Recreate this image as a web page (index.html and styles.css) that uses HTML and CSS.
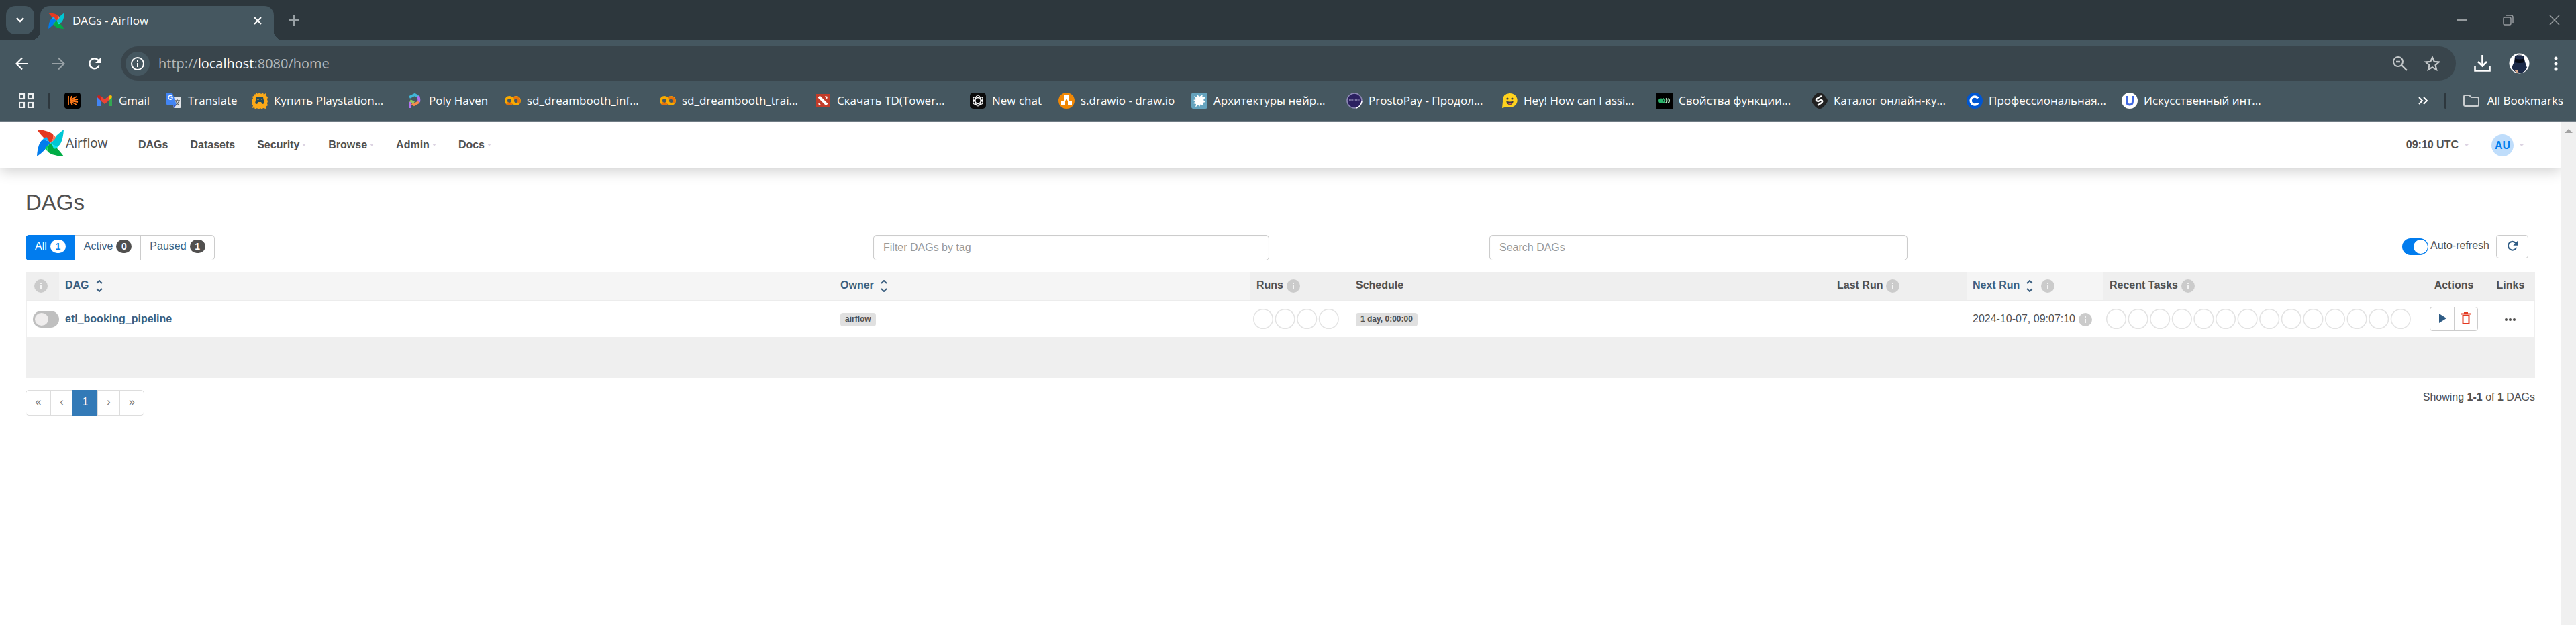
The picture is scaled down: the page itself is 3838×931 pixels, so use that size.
FILE: index.html
```html
<!DOCTYPE html>
<html lang="en">
<head>
<meta charset="utf-8">
<title>DAGs - Airflow</title>
<link rel="stylesheet" href="styles.css">
</head>
<body>
<svg class="defs" aria-hidden="true">
  <symbol id="pinwheel" viewBox="0 0 40 40">
    <path fill="#e43921" d="M0 0C14 1 22 4 24.500 8C25 13 23 17 20 20C15 15 13 12 10 12C6 8 3 4 0 0Z"/>
    <path fill="#ff7557" d="M24.500 8C28 10 29 13 28.500 15C25 16 22 18 20 20C23 17 25 13 24.500 8Z"/>
    <path fill="#00ad46" d="M40 40C26 39 18 36 15.500 32C15 27 17 23 20 20C25 25 27 28 30 28C34 32 37 36 40 40Z"/>
    <path fill="#04d659" d="M15.500 32C12 30 11 27 11.500 25C15 24 18 22 20 20C17 23 15 27 15.500 32Z"/>
    <path fill="#00c7d4" d="M20 20C24 17 28 15 28 10C32 6 36 3 40 0C39 14 36 22 32 24.500C27 25 23 23 20 20Z"/>
    <path fill="#11e1ee" d="M32 24.500C30 28 27 29 25 28.500C24 25 22 22 20 20C23 23 27 25 32 24.500Z"/>
    <path fill="#017cee" d="M0 40C1 26 4 18 8 15.500C13 15 17 17 20 20C15 25 12 27 12 30C8 34 4 37 0 40Z"/>
    <path fill="#0cb6ff" d="M8 15.500C10 12 13 11 15 11.500C16 15 18 18 20 20C17 17 13 15 8 15.500Z"/>
  </symbol>
  <symbol id="info" viewBox="0 0 20 20">
    <circle cx="10" cy="10" r="10" fill="#cbcbcb"/>
    <path fill="#f4f4f4" d="M9 5h2v2H9zM9 9h2v6H9z"/>
  </symbol>
  <symbol id="sort" viewBox="0 0 10 18">
    <path d="M1 5l4-4 4 4M1 13l4 4 4-4" fill="none" stroke="#3b5f80" stroke-width="2"/>
  </symbol>
  <symbol id="colab" viewBox="0 0 24 16">
    <circle cx="7" cy="8" r="5" fill="none" stroke="#f9ab00" stroke-width="4"/>
    <circle cx="17" cy="8" r="5" fill="none" stroke="#f9ab00" stroke-width="4"/>
    <path d="M13.500 4.500a5 5 0 0 1 7 7" fill="none" stroke="#e8710a" stroke-width="4"/>
    <path d="M3.500 11.500a5 5 0 0 0 7 0" fill="none" stroke="#e8710a" stroke-width="4"/>
  </symbol>
  <symbol id="reload" viewBox="0 0 20 20">
    <path d="M16.800 12.500A7.500 7.500 0 1 1 15.500 4.800L17.500 7" fill="none" stroke="currentColor" stroke-width="2.400"/>
    <path d="M19 1v8h-8z" fill="currentColor"/>
  </symbol>
</svg>

<header class="browser">
  <div class="tabstrip">
    <button class="tab-search" aria-label="Search tabs"><svg width="12" height="8" viewBox="0 0 12 8"><path d="M1 1l5 5 5-5" fill="none" stroke="#fff" stroke-width="2.400"/></svg></button>
    <div class="tab">
      <svg width="24" height="24"><use href="#pinwheel"/></svg>
      <span class="tab-title">DAGs - Airflow</span>
      <button class="plain" aria-label="Close tab"><svg width="12" height="12" viewBox="0 0 12 12"><path d="M1 1l10 10M11 1L1 11" stroke="#fff" stroke-width="2"/></svg></button>
    </div>
    <button class="plain new-tab" aria-label="New tab"><svg width="16" height="16" viewBox="0 0 16 16"><path d="M8 0v16M0 8h16" stroke="#98a0a4" stroke-width="2"/></svg></button>
    <div class="window-controls">
      <button class="plain" aria-label="Minimize"><svg width="16" height="16" viewBox="0 0 16 16"><path d="M0 8h16" stroke="#969b9e" stroke-width="2"/></svg></button>
      <button class="plain" aria-label="Restore"><svg width="16" height="16" viewBox="0 0 16 16"><rect x="1" y="4" width="11" height="11" rx="2" fill="none" stroke="#969b9e" stroke-width="1.500"/><path d="M4 1h8q3 0 3 3v8" fill="none" stroke="#969b9e" stroke-width="1.500"/></svg></button>
      <button class="plain" aria-label="Close window"><svg width="16" height="16" viewBox="0 0 16 16"><path d="M1 1l14 14M15 1L1 15" stroke="#969b9e" stroke-width="1.500"/></svg></button>
    </div>
  </div>

  <div class="toolbar">
    <button class="plain nav-btn" aria-label="Back"><svg width="20" height="20" viewBox="0 0 20 20"><path d="M19 10H2M10 1.500L1.500 10l8.500 8.500" fill="none" stroke="#fff" stroke-width="2.200"/></svg></button>
    <button class="plain nav-btn" aria-label="Forward"><svg width="20" height="20" viewBox="0 0 20 20"><path d="M1 10h17M10 1.500l8.500 8.500-8.500 8.500" fill="none" stroke="#98a1a6" stroke-width="2.200"/></svg></button>
    <button class="plain nav-btn white" aria-label="Reload"><svg width="20" height="20"><use href="#reload"/></svg></button>
    <div class="omnibox">
      <button class="site-info" aria-label="Site information"><svg width="20" height="20" viewBox="0 0 20 20"><circle cx="10" cy="10" r="9" fill="none" stroke="#fff" stroke-width="2"/><path d="M10 5v2M10 9v6" stroke="#fff" stroke-width="2"/></svg></button>
      <span class="url">http://<b>localhost</b>:8080/home</span>
      <button class="plain" aria-label="Zoom"><svg width="22" height="22" viewBox="0 0 22 22"><circle cx="8" cy="8" r="7" fill="none" stroke="#c3c7c9" stroke-width="2"/><path d="M5 8h6M13 13l8 8" stroke="#c3c7c9" stroke-width="2.400"/></svg></button>
      <button class="plain star" aria-label="Bookmark this page"><svg width="24" height="23" viewBox="0 0 24 23"><path d="M12 2.500l2.800 6.400 7 .6-5.300 4.600 1.600 6.800-6.100-3.600-6.100 3.600 1.600-6.800L2.200 9.500l7-.6z" fill="none" stroke="#c3c7c9" stroke-width="2.200"/></svg></button>
    </div>
    <button class="plain tool" aria-label="Downloads"><svg width="25" height="25" viewBox="0 0 25 25"><path d="M12.500 0v16M6 10l6.500 6.500L19 10M1.500 17v6.500h22V17" fill="none" stroke="#fff" stroke-width="2.600"/></svg></button>
    <button class="plain tool profile" aria-label="Profile"><svg width="31" height="31" viewBox="0 0 31 31"><circle cx="15.500" cy="15.500" r="15" fill="#fff"/><path d="M9 5q6-5 13 0l2 8 3 9q-4 8-11 8t-12-8l4-9z" fill="#1c2a48"/><path d="M9 8q7 3 14 0v6q-7 2-14 0z" fill="#070b16"/><path d="M13 3h6" stroke="#aaa"/><path d="M8 25l5 1 2 4-4-1z" fill="#d9a98a"/></svg></button>
    <button class="plain tool" aria-label="Menu"><svg width="6" height="22" viewBox="0 0 6 22"><circle cx="3" cy="3" r="2.500" fill="#fff"/><circle cx="3" cy="11" r="2.500" fill="#fff"/><circle cx="3" cy="19" r="2.500" fill="#fff"/></svg></button>
  </div>

  <nav class="bookmarks" aria-label="Bookmarks">
    <button class="plain" aria-label="Tab groups"><svg width="22" height="22" viewBox="0 0 22 22"><g fill="none" stroke="#eef0f1" stroke-width="2.200"><rect x="1" y="1" width="7" height="7"/><rect x="14" y="1" width="7" height="7"/><rect x="1" y="14" width="7" height="7"/><rect x="14" y="14" width="7" height="7"/></g></svg></button>
    <i class="divider"></i>
    <a href="#" class="bm bm-icon" aria-label="Kling"><svg width="24" height="24" viewBox="0 0 24 24"><rect width="24" height="24" rx="4"/><path d="M6 5v14M9 11l2-6M9 11l9-5M9 12l11-2M9 12l11 2M9 13l9 5M9 13l3 6" stroke="#ff7a1a" stroke-width="1.800"/></svg></a>
    <a href="#" class="bm bm-gmail"><svg width="24" height="24" viewBox="0 0 24 24"><path fill="#4285f4" d="M1 6l5 4v10H1z"/><path fill="#34a853" d="M18 10l5-4v14h-5z"/><path fill="#fbbc04" d="M18 5q5-3 5 2l-5 5z"/><path fill="#c5221f" d="M1 7q0-5 5-2v7z"/><path fill="#ea4335" d="M6 5l6 5 6-5v7l-6 5-6-5z"/></svg><span>Gmail</span></a>
    <a href="#" class="bm bm-translate"><svg width="24" height="24" viewBox="0 0 24 24"><path fill="#e0e3e7" d="M8 6h14q1 0 1 1v14q0 2-2 2h-9z"/><path fill="#4285f4" d="M1 1h9l6 17H2q-1 0-1-1z"/><path fill="#3156c8" d="M11 18h5l-4 5z"/><path d="M10 7H7.500M10 7a3 3 0 1 1-1-2" fill="none" stroke="#fff" stroke-width="1.500"/><path d="M14 12h7M17 10v2M20 12q-1 4-5 6M15 13l5 6" fill="none" stroke="#5f6368" stroke-width="1.300"/></svg><span>Translate</span></a>
    <a href="#" class="bm"><svg width="24" height="24" viewBox="0 0 24 24"><path fill="#fba919" d="M3 1l2 2 2-3 2 2 3-2 2 2 3-2 1 3 3-2 1 4 2 2-1 3 1 3-1 3 1 3-3 2v3l-4-1-2 2-2-2-3 2-2-2-3 2-1-3-3 1 1-4-2-2 1-3-1-3 2-2-1-3 2-1z"/><path fill="#254b5c" d="M7 7h10l2 9-3 1-2-3h-4l-2 3-3-1z"/><path d="M8 10h3M9.500 8.500v3M14 10h2" stroke="#fba919"/></svg><span>Купить Playstation...</span></a>
    <a href="#" class="bm bm-poly"><svg width="24" height="24" viewBox="0 0 24 24"><g fill="none" stroke-width="4"><path d="M4 7l8-4 5 3" stroke="#41b7d8"/><path d="M17 5q2 5 1 9" stroke="#b072f0"/><path d="M18 14l-7 4-3-2" stroke="#f58a4b"/><path d="M5 12l6 3" stroke="#8fc866"/><path d="M5 14v9" stroke="#b072f0"/></g></svg><span>Poly Haven</span></a>
    <a href="#" class="bm"><svg width="24" height="16"><use href="#colab"/></svg><span>sd_dreambooth_inf...</span></a>
    <a href="#" class="bm"><svg width="24" height="16"><use href="#colab"/></svg><span>sd_dreambooth_trai...</span></a>
    <a href="#" class="bm"><svg width="24" height="24" viewBox="0 0 24 24"><path fill="#c23c2a" d="M2 2h20v20l-10-1-10 1z"/><path d="M6 6l12 12" stroke="#fff" stroke-width="4"/><path fill="#fff" d="M15 5l4 1-1 4zM5 15l4 3-3 1z"/></svg><span>Скачать TD(Tower...</span></a>
    <a href="#" class="bm bm-chat"><svg width="24" height="24" viewBox="0 0 24 24"><rect width="24" height="24" rx="5" fill="#0b0b0b"/><g fill="none" stroke="#fff" stroke-width="1.200"><ellipse cx="12" cy="12" rx="4" ry="8"/><ellipse cx="12" cy="12" rx="4" ry="8" transform="rotate(60 12 12)"/><ellipse cx="12" cy="12" rx="4" ry="8" transform="rotate(120 12 12)"/></g></svg><span>New chat</span></a>
    <a href="#" class="bm bm-drawio"><svg width="24" height="24" viewBox="0 0 24 24"><circle cx="12" cy="12" r="12" fill="#f08705"/><path d="M12 7l-5 9M12 7l5 9" stroke="#fff" stroke-width="2"/><path fill="#fff" d="M9 4h6v6H9zM4 13h6v5H4zM14 13h6v5h-6z"/></svg><span>s.drawio - draw.io</span></a>
    <a href="#" class="bm"><svg width="24" height="24" viewBox="0 0 24 24"><rect width="24" height="24" rx="3" fill="#65a3be"/><path fill="#fff" d="M4 5l4 2 1-4 3 3 5-3-1 4 5 0-3 4 3 3-4 1 1 5-4-3-2 4-2-3-4 4 1-5-4-1 3-3-3-2 4-1z"/></svg><span>Архитектуры нейр...</span></a>
    <a href="#" class="bm"><svg width="24" height="24" viewBox="0 0 24 24"><circle cx="12" cy="12" r="11" fill="#2b2060" stroke="#8d88b5" stroke-width="1.500"/><path d="M15 23q7-3 8-10" fill="none" stroke="#fff" stroke-width="1.500"/><path d="M4 11.500h16" stroke="#77709f" stroke-width="3" stroke-dasharray="1.500 .7"/></svg><span>ProstoPay - Продол...</span></a>
    <a href="#" class="bm"><svg width="24" height="24" viewBox="0 0 24 24"><path fill="#ffd21e" d="M12 1a11 10.500 0 1 1-4 20l-7 2 1-10Q1 2 12 1z"/><circle cx="9" cy="9" r="1.600" fill="#3a3b45"/><circle cx="16" cy="9" r="1.600" fill="#3a3b45"/><path d="M7 12q5.500 3 11 0-1 6-5.500 6T7 12z" fill="#3a3b45"/><path d="M10 16q2.500-2 5 0-2.500 3-5 0z" fill="#ef4e4e"/></svg><span>Hey! How can I assi...</span></a>
    <a href="#" class="bm"><svg width="24" height="24" viewBox="0 0 24 24"><rect width="24" height="24"/><circle cx="6.500" cy="12" r="3.500" fill="#2bb36b"/><path d="M10 8.500q6 3.500 0 7 3-3.500 0-7z" fill="#39c67b" stroke="#39c67b"/><path d="M14 8.500q3 3.500 0 7M17.500 8.500q3 3.500 0 7" fill="none" stroke="#b8ecc5" stroke-width="2"/></svg><span>Свойства функции...</span></a>
    <a href="#" class="bm"><svg width="24" height="24" viewBox="0 0 24 24"><path fill="#212121" d="M12 0q4 0 8 5t4 7-4 7-8 5-8-5-4-7 4-7 8-5z"/><path d="M15 5L8 9q-3 3 2 4l4-2q4 1 1 4l-6 4" fill="none" stroke="#fff" stroke-width="2.500"/></svg><span>Каталог онлайн-ку...</span></a>
    <a href="#" class="bm"><svg width="24" height="24" viewBox="0 0 24 24"><circle cx="12" cy="12" r="12" fill="#0056d2"/><path d="M17 8.500a6 6 0 1 0 0 7" fill="none" stroke="#fff" stroke-width="3.500"/></svg><span>Профессиональная...</span></a>
    <a href="#" class="bm"><svg width="24" height="24" viewBox="0 0 24 24"><circle cx="12" cy="12" r="12" fill="#fff"/><path d="M7.500 5v8q0 5 4.500 5t4.500-5V5" fill="none" stroke="#4169e1" stroke-width="3"/></svg><span>Искусственный инт...</span></a>
    <div class="bookmarks-end">
      <button class="plain" aria-label="More bookmarks"><svg width="14" height="12" viewBox="0 0 14 12"><path d="M1 1l5 5-5 5M8 1l5 5-5 5" fill="none" stroke="#fff" stroke-width="2"/></svg></button>
      <i class="divider"></i>
      <a href="#" class="bm-all"><svg width="24" height="18" viewBox="0 0 24 18"><path d="M1 3q0-2 2-2h6l3 3h9q2 0 2 2v9q0 2-2 2H3q-2 0-2-2z" fill="none" stroke="#c9cdcf" stroke-width="2"/></svg><span>All Bookmarks</span></a>
    </div>
  </nav>
</header>

<div class="viewport">
  <div class="page">
    <nav class="navbar">
      <a href="#" class="brand"><svg width="40" height="40"><use href="#pinwheel"/></svg><span>Airflow</span></a>
      <a href="#" class="nav-item">DAGs</a>
      <a href="#" class="nav-item">Datasets</a>
      <a href="#" class="nav-item">Security<i class="caret"></i></a>
      <a href="#" class="nav-item">Browse<i class="caret"></i></a>
      <a href="#" class="nav-item">Admin<i class="caret"></i></a>
      <a href="#" class="nav-item">Docs<i class="caret"></i></a>
      <a href="#" class="nav-item clock">09:10 UTC<i class="caret wide"></i></a>
      <a href="#" class="nav-item user"><span class="avatar">AU</span><i class="caret wide"></i></a>
    </nav>

    <main>
      <h1>DAGs</h1>
      <div class="controls">
        <div class="filters">
          <a href="#" class="filter active">All <span class="count">1</span></a>
          <a href="#" class="filter">Active <span class="count">0</span></a>
          <a href="#" class="filter">Paused <span class="count">1</span></a>
        </div>
        <input class="field tags" type="text" placeholder="Filter DAGs by tag" aria-label="Filter DAGs by tag">
        <input class="field search" type="text" placeholder="Search DAGs" aria-label="Search DAGs">
        <div class="refresh">
          <input class="switch" type="checkbox" id="auto-refresh" checked>
          <label for="auto-refresh">Auto-refresh</label>
          <button class="refresh-btn" aria-label="Refresh"><svg width="17" height="17"><use href="#reload"/></svg></button>
        </div>
      </div>

      <div class="table-wrap">
        <table>
          <colgroup><col class="c-toggle"><col><col class="c-owner"><col class="c-runs"><col class="c-schedule"><col class="c-last"><col class="c-next"><col class="c-tasks"><col class="c-actions"><col class="c-links"></colgroup>
          <thead>
            <tr>
              <th class="toggle-head"><svg width="20" height="20"><use href="#info"/></svg></th>
              <th class="sortable"><a href="#">DAG<svg class="sort" width="10" height="18"><use href="#sort"/></svg></a></th>
              <th class="sortable"><a href="#">Owner<svg class="sort" width="10" height="18"><use href="#sort"/></svg></a></th>
              <th>Runs<svg class="tip" width="20" height="20"><use href="#info"/></svg></th>
              <th>Schedule</th>
              <th>Last Run<svg class="tip" width="20" height="20"><use href="#info"/></svg></th>
              <th class="sortable"><a href="#">Next Run<svg class="sort" width="10" height="18"><use href="#sort"/></svg></a><svg class="tip far" width="20" height="20"><use href="#info"/></svg></th>
              <th>Recent Tasks<svg class="tip" width="20" height="20"><use href="#info"/></svg></th>
              <th class="center">Actions</th>
              <th class="center">Links</th>
            </tr>
          </thead>
          <tbody>
            <tr>
              <td><input class="switch" type="checkbox" aria-label="Unpause etl_booking_pipeline"></td>
              <td><a href="#" class="dag">etl_booking_pipeline</a></td>
              <td><a href="#" class="label">airflow</a></td>
              <td class="rings"><svg width="130" height="32" viewBox="0 0 130 32"><g fill="none" stroke="#e3e3e3" stroke-width="1.500"><circle cx="16" cy="16" r="14.300"/><circle cx="48.600" cy="16" r="14.300"/><circle cx="81.200" cy="16" r="14.300"/><circle cx="113.800" cy="16" r="14.300"/></g></svg></td>
              <td><a href="#" class="label">1 day, 0:00:00</a></td>
              <td></td>
              <td class="date">2024-10-07, 09:07:10<svg class="tip" width="20" height="20"><use href="#info"/></svg></td>
              <td class="rings"><svg width="456" height="32" viewBox="0 0 456 32"><g fill="none" stroke="#e3e3e3" stroke-width="1.500"><circle cx="16" cy="16" r="14.300"/><circle cx="48.600" cy="16" r="14.300"/><circle cx="81.200" cy="16" r="14.300"/><circle cx="113.800" cy="16" r="14.300"/><circle cx="146.400" cy="16" r="14.300"/><circle cx="179" cy="16" r="14.300"/><circle cx="211.600" cy="16" r="14.300"/><circle cx="244.200" cy="16" r="14.300"/><circle cx="276.800" cy="16" r="14.300"/><circle cx="309.400" cy="16" r="14.300"/><circle cx="342" cy="16" r="14.300"/><circle cx="374.600" cy="16" r="14.300"/><circle cx="407.200" cy="16" r="14.300"/><circle cx="439.800" cy="16" r="14.300"/></g></svg></td>
              <td class="center"><div class="actions"><button aria-label="Trigger DAG"><svg width="20" height="20" viewBox="0 0 20 20"><path d="M5 3v14l11-7z" fill="#2f5c85"/></svg></button><button aria-label="Delete DAG"><svg width="20" height="20" viewBox="0 0 20 20"><path d="M3 3.500h14M7 2h6M5.500 6h9v12h-9z" fill="none" stroke="#e43921" stroke-width="2"/></svg></button></div></td>
              <td class="center"><a href="#" aria-label="Links"><svg width="16" height="6" viewBox="0 0 16 6"><g fill="#51504f"><circle cx="2" cy="3" r="2"/><circle cx="8" cy="3" r="2"/><circle cx="14" cy="3" r="2"/></g></svg></a></td>
            </tr>
          </tbody>
        </table>
      </div>

      <div class="footer">
        <nav class="pager" aria-label="Pagination">
          <a href="#">«</a><a href="#">‹</a><a href="#" class="current">1</a><a href="#">›</a><a href="#">»</a>
        </nav>
        <div>Showing <strong>1-1</strong> of <strong>1</strong> DAGs</div>
      </div>
    </main>
  </div>
  <div class="scrollbar"><i class="scroll-up"></i></div>
</div>
</body>
</html>
```
FILE: styles.css
```css
* { box-sizing: border-box; }
body {
  margin: 0;
  min-height: 100vh;
  display: flex;
  flex-direction: column;
  background: #fff;
  color: #51504f;
  font: 16px/22px "Liberation Sans", Arial, sans-serif;
}
svg { display: block; flex: none; }
a { color: #3b5f80; text-decoration: none; }
button { font: inherit; cursor: pointer; }
.defs { position: absolute; width: 0; height: 0; }
.plain { display: flex; padding: 0; border: 0; background: none; }

/* Browser window */
.browser {
  background: #455760;
  border-bottom: 2px solid #6f7b84;
  color: #fff;
  font: 17px/24px "Open Sans", "Noto Sans", sans-serif;
}
.tabstrip {
  display: flex;
  align-items: center;
  height: 60px;
  padding-left: 9px;
  background: #2d373d;
}
.tab-search {
  display: grid;
  place-items: center;
  width: 42px;
  height: 42px;
  border: 0;
  border-radius: 14px;
  background: #43555e;
}
.tab {
  position: relative;
  display: flex;
  align-items: center;
  align-self: flex-end;
  width: 348px;
  height: 51px;
  margin-left: 9px;
  padding: 0 18px 8px 12px;
  border-radius: 14px 14px 0 0;
  background: #455760;
}
.tab::before, .tab::after {
  content: "";
  position: absolute;
  bottom: 0;
  width: 14px;
  height: 14px;
}
.tab::before { right: 100%; background: radial-gradient(circle at 0 0, transparent 14px, #455760 14px); }
.tab::after { left: 100%; background: radial-gradient(circle at 100% 0, transparent 14px, #455760 14px); }
.tab-title { flex: 1; margin-left: 12px; }
.new-tab { margin-left: 22px; }
.window-controls { display: flex; gap: 53px; margin-left: auto; padding-right: 24px; }

.toolbar { display: flex; align-items: center; height: 69px; padding: 0 27px 0 23px; }
.nav-btn { width: 20px; margin-right: 34px; }
.white { color: #fff; }
.omnibox {
  display: flex;
  flex: 1;
  align-items: center;
  height: 51px;
  margin-right: 27px;
  margin-left: -5px;
  padding: 0 23px 0 7px;
  border-radius: 26px;
  background: #39454c;
}
.site-info {
  display: grid;
  place-items: center;
  width: 36px;
  height: 36px;
  border: 0;
  border-radius: 50%;
  background: #455760;
}
.url { flex: 1; margin-left: 13px; color: #b3b8bb; font-size: 20px; }
.url b { color: #fff; font-weight: 400; }
.star { margin-left: 25px; }
.tool + .tool { margin-left: 27px; }
.tool.profile + .tool { margin-left: 36px; }

.bookmarks { display: flex; align-items: center; height: 51px; padding: 0 19px 9px 28px; white-space: nowrap; }
.divider { width: 3px; height: 24px; border-radius: 2px; background: #2d373d; }
.bookmarks > .divider { margin: 0 21px 0 22px; }
.bm { display: flex; flex: none; align-items: center; gap: 9px; width: 231px; color: #fff; }
.bm-icon { width: 48px; }
.bm-gmail { width: 103px; }
.bm-translate { width: 128px; }
.bm-poly { width: 146px; }
.bm-chat { width: 132px; }
.bm-drawio { width: 198px; }
.bookmarks-end { display: flex; align-items: center; gap: 25px; margin-left: auto; }
.bm-all { display: flex; align-items: center; gap: 12px; color: #fff; }

/* Page */
.viewport { display: flex; flex: 1; }
.page { flex: 1; min-width: 0; overflow: hidden; }
.scrollbar { width: 22px; padding: 10px 5px; background: #f0f0f0; }
.scroll-up { display: block; border: 6px solid transparent; border-top: 0; border-bottom-color: #a3a3a3; }

.navbar {
  display: flex;
  align-items: center;
  height: 68px;
  padding: 0 55px 0 55px;
  box-shadow: 0 4px 20px rgba(0, 0, 0, .2);
  font-weight: 700;
}
.brand {
  display: flex;
  align-items: center;
  gap: 3px;
  width: 151px;
  padding-bottom: 6px;
  color: #51504f;
  font: 19px/22px "Noto Sans", sans-serif;
}
.nav-item { display: flex; align-items: center; margin-right: 33px; color: #51504f; }
.caret { margin-left: 4px; border: 3px solid transparent; border-top: 4px solid #dcd3e2; border-bottom: 0; }
.caret.wide { margin-left: 8px; border-width: 4px 4px 0; }
.clock { margin-left: auto; }
.user { margin-right: 0; }
.avatar {
  width: 33px;
  border-radius: 50%;
  background: #bfddfb;
  color: #017cee;
  line-height: 33px;
  text-align: center;
}

main { padding: 36px 39px 0 38px; }
h1 { margin: 0 0 32px; font-size: 33px; font-weight: 400; line-height: 32px; }
.controls { display: flex; align-items: center; height: 38px; margin-bottom: 17px; }
.filters { display: flex; flex: 0 1 1263px; }
.filter {
  display: flex;
  align-items: center;
  gap: 5px;
  height: 38px;
  margin-left: -1px;
  padding: 0 13px 4px;
  border: 1px solid #ccc;
}
.filter:first-child { margin-left: 0; border-radius: 5px 0 0 5px; }
.filter:last-child { border-radius: 0 5px 5px 0; }
.filter.active { border-color: #017cee; background: #017cee; color: #fff; }
.count {
  width: 23px;
  border-radius: 10px;
  background: #51504f;
  color: #fff;
  font-size: 14px;
  font-weight: 700;
  line-height: 20px;
  text-align: center;
}
.active .count { background: #fff; color: #017cee; }
.field {
  height: 38px;
  padding: 0 14px;
  border: 1px solid #ccc;
  border-radius: 5px;
  box-shadow: inset 0 1px 1px rgba(0, 0, 0, .08);
  font: inherit;
}
.field::placeholder { color: #999; opacity: 1; }
.tags { flex: 0 1 590px; }
.search { flex: 0 1 623px; margin-left: 328px; }
.refresh { display: flex; align-items: center; margin-left: auto; padding-right: 10px; align-self: flex-start; }
.refresh label { margin: 0 10px 0 3px; padding-bottom: 4px; }
.refresh-btn {
  display: flex;
  justify-content: center;
  width: 48px;
  height: 35px;
  padding: 7px 0 0;
  border: 1px solid #ccc;
  border-radius: 4px;
  background: #fff;
  color: #2f5c85;
}
.switch {
  appearance: none;
  display: block;
  width: 39px;
  height: 25px;
  margin: 0;
  padding: 3px;
  border-radius: 13px;
  background: #bfbfbf;
}
.switch::before { content: ""; display: block; width: 20px; height: 19px; border-radius: 50%; background: #efeded; }
.switch:checked { background: #017cee; }
.switch:checked::before { width: 21px; height: 21px; margin: -1px 0 0 14px; background: #fff; }

.table-wrap { padding-bottom: 61px; background: #efefef; }
table { width: 100%; table-layout: fixed; border-collapse: separate; border-spacing: 0; }
th, td { padding: 0 9px; text-align: left; }
th { height: 43px; padding-bottom: 2px; border-bottom: 1px solid #ececec; white-space: nowrap; }
th svg, td svg { display: inline-block; vertical-align: middle; }
td { height: 54px; background: #fff; }
td:first-child { border-left: 2px solid #efefef; }
td:last-child { border-right: 2px solid #efefef; }
.sortable { background: #f5f5f5; }
.sort { margin-left: 10px; }
.tip { margin-left: 5px; }
.tip.far { margin-left: 12px; }
.center { padding: 0; text-align: center; }
th.center { padding: 0 0 2px; }
.toggle-head { padding-left: 13px; }
.c-toggle { width: 50px; }
.c-owner { width: 620px; }
.c-runs { width: 148px; }
.c-schedule { width: 717px; }
.c-last { width: 202px; }
.c-next { width: 204px; }
.c-tasks { width: 474px; }
.c-actions { width: 96px; }
.c-links { width: 73px; }
.dag { font-weight: 700; }
.date { white-space: nowrap; }
.label {
  display: inline-block;
  padding: 0 7px 2px;
  border-radius: 4px;
  background: #e0e0e0;
  color: #51504f;
  font-size: 12px;
  font-weight: 700;
  line-height: 18px;
  vertical-align: middle;
}
.rings { padding: 0 3px; }
.actions { display: inline-flex; vertical-align: middle; border: 1px solid #ccc; border-radius: 4px; }
.actions button { width: 35px; height: 34px; padding: 4px 7px 9px; border: 0; background: none; }
.actions button + button { border-left: 1px solid #ccc; }

.footer { display: flex; justify-content: space-between; margin-top: 18px; }
.pager { display: flex; }
.pager a {
  width: 34px;
  height: 38px;
  margin-left: -1px;
  border: 1px solid #ddd;
  color: #777;
  line-height: 34px;
  text-align: center;
}
.pager a:first-child { width: 38px; margin-left: 0; border-radius: 5px 0 0 5px; }
.pager a:last-child { width: 37px; border-radius: 0 5px 5px 0; }
.pager .current { width: 38px; border-color: #337ab7; background: #337ab7; color: #fff; }
```
